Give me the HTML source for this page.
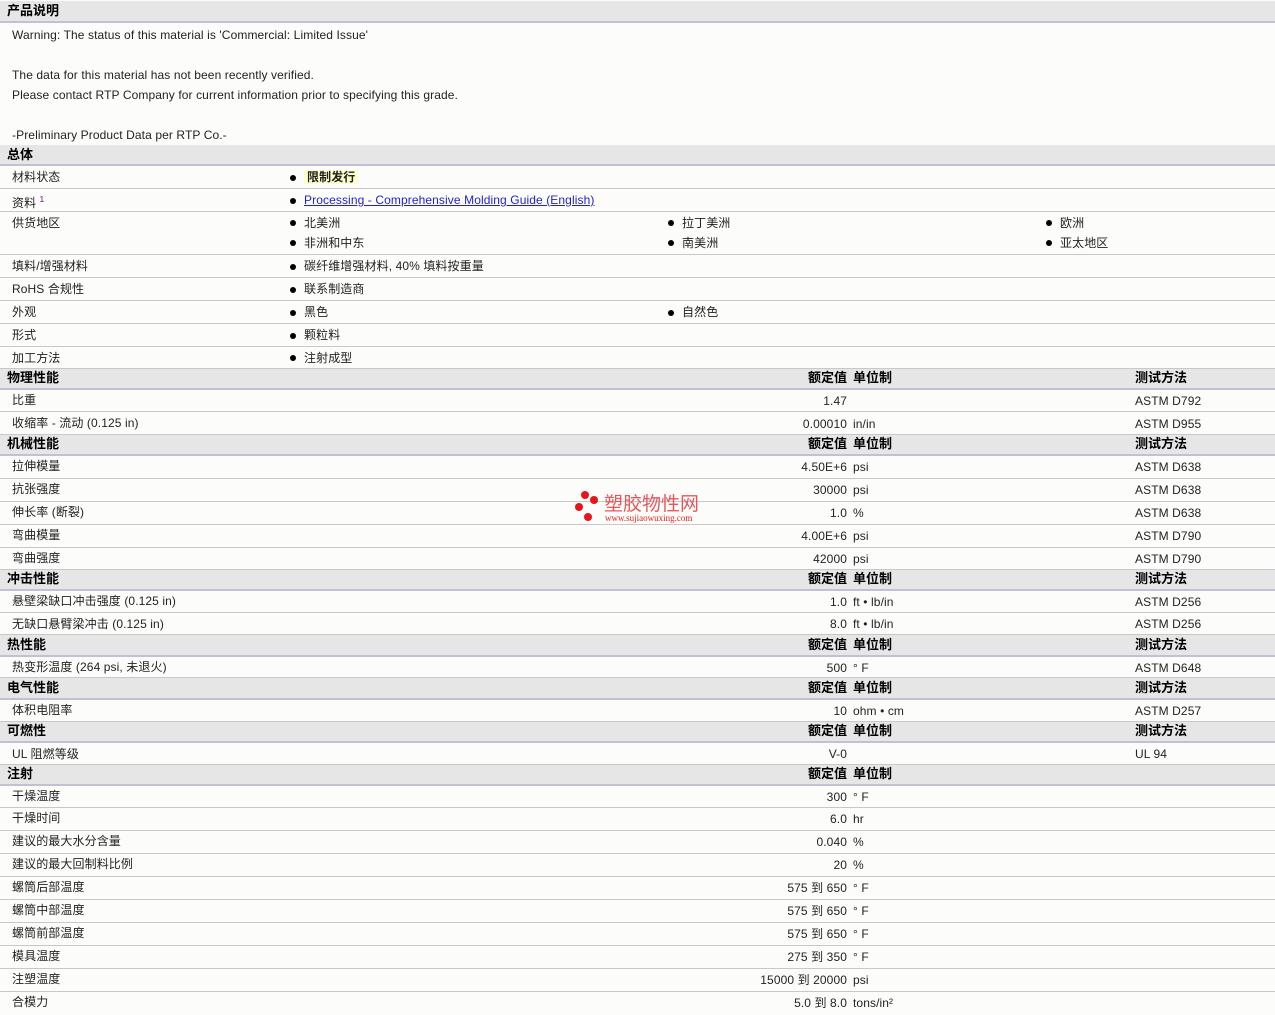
<!DOCTYPE html>
<html><head><meta charset="utf-8"><style>
*{margin:0;padding:0;box-sizing:border-box}
body{width:1275px;height:1015px;overflow:hidden;background:#fcfdfb;font-family:"Liberation Sans","Noto Sans CJK SC",sans-serif;font-size:12px;color:#222;position:relative;letter-spacing:0.1px}
.r{position:absolute;left:0;width:1275px;border-bottom:1px solid #c8c8c8}
.h{background:#e6e6e6;border-bottom:2px solid #c4c0d4;font-weight:bold;font-size:13px;color:#000;letter-spacing:0}
.r span{position:absolute;white-space:nowrap}
.l{left:12px;top:1px}
.hl{left:7px}
.v{right:428px;text-align:right}
.u{left:853px}
.m{left:1135px}
.hv{right:428px}
.hu{left:853px}
.hm{left:1135px}
.b{padding-left:14px}
.b:before{content:"";position:absolute;left:0;top:50%;margin-top:-3px;width:6px;height:6px;border-radius:50%;background:#000}
a{color:#2222cc}
.t{position:absolute;left:12px;white-space:nowrap}
</style></head><body>
<div class="r h" style="top:1px;height:22px;line-height:20px"><span class="hl">产品说明</span></div>
<div class="t" style="top:27px;line-height:16px">Warning: The status of this material is 'Commercial: Limited Issue'</div>
<div class="t" style="top:67px;line-height:16px">The data for this material has not been recently verified.</div>
<div class="t" style="top:87px;line-height:16px">Please contact RTP Company for current information prior to specifying this grade.</div>
<div class="t" style="top:127px;line-height:16px">-Preliminary Product Data per RTP Co.-</div>

<div class="r h" style="top:145px;height:21px;line-height:19px"><span class="hl">总体</span></div>
<div class="r" style="top:166px;height:23px;line-height:21px"><span class="l">材料状态</span><span class="b" style="left:290px;top:1px"><b style="background:#ffffcc;padding:0 3px">限制发行</b></span></div>
<div class="r" style="top:189px;height:23px;line-height:21px"><span class="l" style="top:0">资料 <sup style="font-size:8px;color:#606">1</sup></span><span class="b" style="left:290px;top:1px"><a href="#">Processing - Comprehensive Molding Guide (English)</a></span></div>
<div class="r" style="top:212px;height:43px;line-height:20px">
<span class="l" style="top:1px">供货地区</span>
<span class="b" style="left:290px;top:1px">北美洲</span><span class="b" style="left:290px;top:21px">非洲和中东</span>
<span class="b" style="left:668px;top:1px">拉丁美洲</span><span class="b" style="left:668px;top:21px">南美洲</span>
<span class="b" style="left:1046px;top:1px">欧洲</span><span class="b" style="left:1046px;top:21px">亚太地区</span></div>
<div class="r" style="top:255px;height:23px;line-height:21px"><span class="l">填料/增强材料</span><span class="b" style="left:290px;top:1px">碳纤维增强材料, 40% 填料按重量</span></div>
<div class="r" style="top:278px;height:23px;line-height:21px"><span class="l">RoHS 合规性</span><span class="b" style="left:290px;top:1px">联系制造商</span></div>
<div class="r" style="top:301px;height:23px;line-height:21px"><span class="l">外观</span><span class="b" style="left:290px;top:1px">黑色</span><span class="b" style="left:668px;top:1px">自然色</span></div>
<div class="r" style="top:324px;height:23px;line-height:21px"><span class="l">形式</span><span class="b" style="left:290px;top:1px">颗粒料</span></div>
<div class="r" style="top:347px;height:22px;line-height:20px"><span class="l">加工方法</span><span class="b" style="left:290px;top:1px">注射成型</span></div>

<div class="r h" style="top:369px;height:21px;line-height:18px"><span class="hl">物理性能</span><span class="hv">额定值</span><span class="hu">单位制</span><span class="hm">测试方法</span></div>
<div class="r" style="top:390px;height:22px;line-height:23px"><span class="l" style="line-height:19px">比重</span><span class="v">1.47</span><span class="m">ASTM D792</span></div>
<div class="r" style="top:412px;height:23px;line-height:24px"><span class="l" style="line-height:21px">收缩率 - 流动 (0.125 in)</span><span class="v">0.00010</span><span class="u">in/in</span><span class="m">ASTM D955</span></div>

<div class="r h" style="top:435px;height:21px;line-height:18px"><span class="hl">机械性能</span><span class="hv">额定值</span><span class="hu">单位制</span><span class="hm">测试方法</span></div>
<div class="r" style="top:456px;height:23px;line-height:23px"><span class="l" style="line-height:19px">拉伸模量</span><span class="v">4.50E+6</span><span class="u">psi</span><span class="m">ASTM D638</span></div>
<div class="r" style="top:479px;height:23px;line-height:23px"><span class="l" style="line-height:19px">抗张强度</span><span class="v">30000</span><span class="u">psi</span><span class="m">ASTM D638</span></div>
<div class="r" style="top:502px;height:23px;line-height:23px"><span class="l" style="line-height:19px">伸长率 (断裂)</span><span class="v">1.0</span><span class="u">%</span><span class="m">ASTM D638</span></div>
<div class="r" style="top:525px;height:23px;line-height:23px"><span class="l" style="line-height:19px">弯曲模量</span><span class="v">4.00E+6</span><span class="u">psi</span><span class="m">ASTM D790</span></div>
<div class="r" style="top:548px;height:22px;line-height:23px"><span class="l" style="line-height:19px">弯曲强度</span><span class="v">42000</span><span class="u">psi</span><span class="m">ASTM D790</span></div>

<div class="r h" style="top:570px;height:21px;line-height:18px"><span class="hl">冲击性能</span><span class="hv">额定值</span><span class="hu">单位制</span><span class="hm">测试方法</span></div>
<div class="r" style="top:591px;height:22px;line-height:23px"><span class="l" style="line-height:19px">悬壁梁缺口冲击强度 (0.125 in)</span><span class="v">1.0</span><span class="u">ft • lb/in</span><span class="m">ASTM D256</span></div>
<div class="r" style="top:613px;height:22px;line-height:23px"><span class="l" style="line-height:21px">无缺口悬臂梁冲击 (0.125 in)</span><span class="v">8.0</span><span class="u">ft • lb/in</span><span class="m">ASTM D256</span></div>

<div class="r h" style="top:635px;height:22px;line-height:19px"><span class="hl">热性能</span><span class="hv">额定值</span><span class="hu">单位制</span><span class="hm">测试方法</span></div>
<div class="r" style="top:657px;height:21px;line-height:22px"><span class="l" style="line-height:19px">热变形温度 (264 psi, 未退火)</span><span class="v">500</span><span class="u">° F</span><span class="m">ASTM D648</span></div>

<div class="r h" style="top:678px;height:22px;line-height:19px"><span class="hl">电气性能</span><span class="hv">额定值</span><span class="hu">单位制</span><span class="hm">测试方法</span></div>
<div class="r" style="top:700px;height:22px;line-height:22px"><span class="l" style="line-height:19px">体积电阻率</span><span class="v">10</span><span class="u">ohm • cm</span><span class="m">ASTM D257</span></div>

<div class="r h" style="top:722px;height:21px;line-height:18px"><span class="hl">可燃性</span><span class="hv">额定值</span><span class="hu">单位制</span><span class="hm">测试方法</span></div>
<div class="r" style="top:743px;height:22px;line-height:22px"><span class="l" style="line-height:21px">UL 阻燃等级</span><span class="v">V-0</span><span class="m">UL 94</span></div>

<div class="r h" style="top:765px;height:21px;line-height:18px"><span class="hl">注射</span><span class="hv">额定值</span><span class="hu">单位制</span></div>
<div class="r" style="top:786px;height:22px;line-height:22px"><span class="l" style="line-height:19px">干燥温度</span><span class="v">300</span><span class="u">° F</span></div>
<div class="r" style="top:808px;height:23px;line-height:23px"><span class="l" style="line-height:19px">干燥时间</span><span class="v">6.0</span><span class="u">hr</span></div>
<div class="r" style="top:831px;height:23px;line-height:23px"><span class="l" style="line-height:19px">建议的最大水分含量</span><span class="v">0.040</span><span class="u">%</span></div>
<div class="r" style="top:854px;height:23px;line-height:23px"><span class="l" style="line-height:19px">建议的最大回制料比例</span><span class="v">20</span><span class="u">%</span></div>
<div class="r" style="top:877px;height:23px;line-height:23px"><span class="l" style="line-height:19px">螺筒后部温度</span><span class="v">575 到 650</span><span class="u">° F</span></div>
<div class="r" style="top:900px;height:23px;line-height:23px"><span class="l" style="line-height:19px">螺筒中部温度</span><span class="v">575 到 650</span><span class="u">° F</span></div>
<div class="r" style="top:923px;height:23px;line-height:23px"><span class="l" style="line-height:19px">螺筒前部温度</span><span class="v">575 到 650</span><span class="u">° F</span></div>
<div class="r" style="top:946px;height:23px;line-height:23px"><span class="l" style="line-height:19px">模具温度</span><span class="v">275 到 350</span><span class="u">° F</span></div>
<div class="r" style="top:969px;height:23px;line-height:23px"><span class="l" style="line-height:19px">注塑温度</span><span class="v">15000 到 20000</span><span class="u">psi</span></div>
<div class="r" style="top:992px;height:23px;line-height:23px;border:none"><span class="l" style="line-height:19px">合模力</span><span class="v">5.0 到 8.0</span><span class="u">tons/in²</span></div>

<div style="position:absolute;left:575px;top:491px;width:130px;height:34px">
<div style="position:absolute;left:6px;top:0;width:8px;height:8px;border-radius:50%;background:#e8141c"></div>
<div style="position:absolute;left:15px;top:5px;width:8px;height:8px;border-radius:50%;background:#e8141c"></div>
<div style="position:absolute;left:0;top:12px;width:8px;height:8px;border-radius:50%;background:#e8141c"></div>
<div style="position:absolute;left:9px;top:22px;width:8px;height:8px;border-radius:50%;background:#e8141c"></div>
<div style="position:absolute;left:29px;top:2px;font-size:19px;line-height:20px;color:#e8565c;white-space:nowrap;font-family:'Noto Sans CJK SC',sans-serif;letter-spacing:0">塑胶物性网</div>
<div style="position:absolute;left:30px;top:23px;font-size:9px;line-height:9px;color:#d22;font-family:'Liberation Serif',serif;white-space:nowrap;letter-spacing:0">www.sujiaowuxing.com</div>
</div>
</body></html>
